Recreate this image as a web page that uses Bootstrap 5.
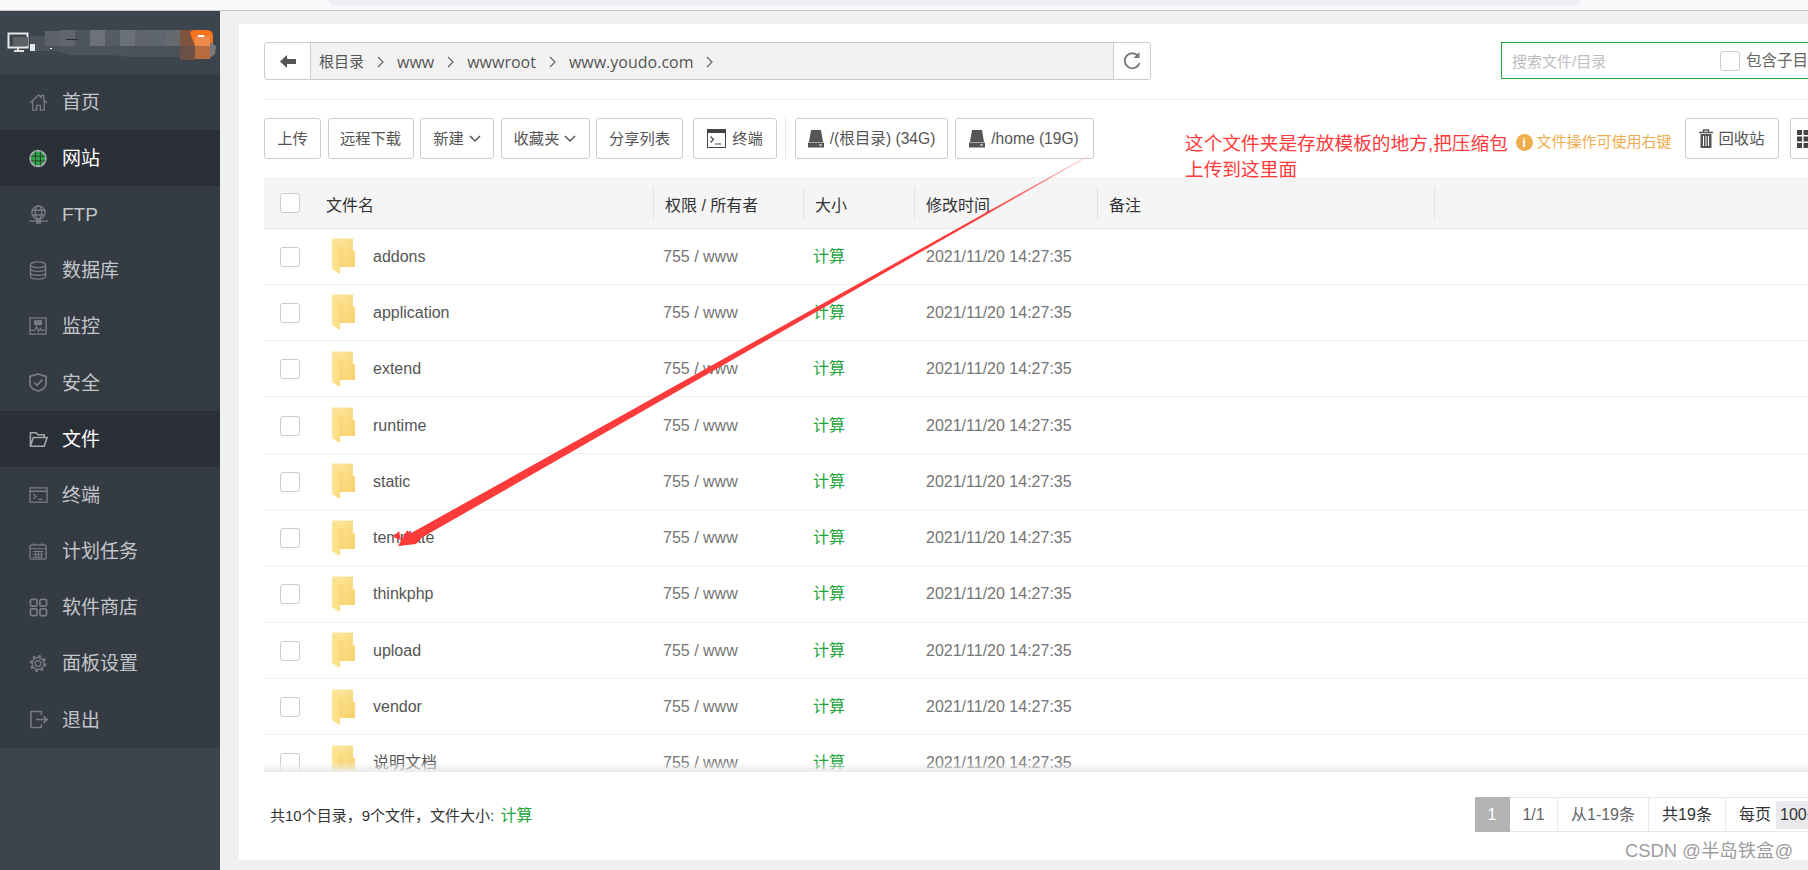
<!DOCTYPE html>
<html lang="zh-CN">
<head>
<meta charset="utf-8">
<title>文件管理</title>
<link rel="stylesheet" href="https://cdn.jsdelivr.net/npm/bootstrap@5.3.0/dist/css/bootstrap.min.css">
<style>
html,body{height:100%;overflow:hidden}
body{font-family:"Liberation Sans","Noto Sans CJK SC",sans-serif;background:#f0f0f0;color:#555;position:relative}
.top-strip{height:11px;flex:none;background:#f8f9fb;border-bottom:1px solid #c9c9c9}
.top-tab{width:1252px;height:5px;margin-left:329px;background:#eeeff3;border-radius:0 0 7px 7px}
.side{width:220px;flex:none;background:#3c444e}
.logo-box{height:63px;padding-top:13px;flex:none}
.logo-box svg{display:block}
.side-nav{background:#343b43}
.side-link{height:56.17px;padding:0 0 0 29px;display:flex;align-items:center;color:#c3c6c9;font-size:19px;gap:14px}
.side-link span{padding-top:2px}
.side-link:hover{color:#fff}
.side-link.on{background:#2b3038;color:#fff}
.nv-ic{width:19px;height:19px;flex:none;fill:none;stroke:#777c81;stroke-width:1.4}
.work{padding:13px 0 10px 19px;min-width:0}
.sheet{background:#fff;height:100%;padding:18px 0 0 25px;overflow:hidden}
.path-row{padding-bottom:19px;border-bottom:1px solid #eee;flex:none}
.path-bar{flex:0 0 887px;height:38px;border:1px solid #ccc;border-radius:3px;overflow:hidden}
.path-back{flex:0 0 46px;border-right:1px solid #ccc}
.path-mid{background:#f2f2f2;font-size:15px;color:#555;gap:13px;padding:2px 0 0 8px}
.path-mid .lat{font-family:"Open Sans","Noto Sans CJK SC",sans-serif;font-size:16px}
.path-re{flex:0 0 37px;border-left:1px solid #ccc}
.find-box{flex:0 0 340px;margin-left:350px;height:37px;border:1px solid #20a53a;padding-left:10px;font-size:15px}
.find-hint{flex:0 0 208px;color:#bdbdbd;padding-top:3px}
.find-box .tick{margin-right:6px}
.find-box .find-lbl{white-space:nowrap;color:#666;font-size:15.5px}
.tick{width:20px;height:20px;border:1px solid #ccc;border-radius:3px;background:#fff;display:block;flex:none}
.tool-row{margin-top:18px;margin-bottom:18px;flex:none;height:41px}
.tb-btn{flex:none;height:41px;padding:0;font-size:15.3px;line-height:39px;color:#555;border:1px solid #ccc;border-radius:3px;background:#fff;white-space:nowrap;display:inline-flex;align-items:center;justify-content:center;gap:5px}
.tb-wide{gap:6px}
.tb-gap{margin-left:6.5px}
.w-up{width:57px}.w-dl{width:86px}.w-new{width:74px}.w-fav{width:89px}.w-sh{width:87px}.w-tm{width:84px;margin-left:10px}
.w-root{width:153px;font-size:15.6px}.w-home{width:139px;font-size:15.6px}.w-bin{width:94px}.w-gr{width:60px;margin-left:11px;justify-content:flex-start;padding-left:6px}
.tb-sep{flex:none;width:1px;height:41px;background:#e8e8e8;margin:0 9px 0 8px}
.tip-note{flex:none;margin-left:422px;width:169px;color:#f0ad4e;font-size:15px;padding-top:8px;gap:4px;white-space:nowrap}
.tip-dot{width:17px;height:17px;flex:none;border-radius:50%;background:#f0ad4e;color:#fff;font-weight:700;font-size:13px;line-height:17px;text-align:center}
.grid-wrap{flex:1 1 auto;min-height:0;overflow:hidden;position:relative}
.grid-wrap::after{content:"";position:absolute;left:0;right:0;bottom:0;height:10px;background:linear-gradient(rgba(235,235,235,0),#ebebeb)}
.file-tb{table-layout:fixed;width:100%;margin:0;color:#555;font-size:16px}
.file-tb th{height:51px;padding:10px 0 0;vertical-align:top;background:#f5f5f5;border-bottom:1px solid #e4e4e4;font-weight:400;color:#333;box-shadow:none}
.file-tb td{height:56.3px;padding:1px 0 0;border-bottom:1px solid #f0f0f0;vertical-align:middle;box-shadow:none}
.th-in{height:32px;border-left:1px solid #e2e2e2;padding:6px 0 0 11px;display:flex;align-items:center;white-space:nowrap}
.th-plain{border-left:0;padding-left:0}
.cell-g{color:#757575;padding-left:10px!important}
.cell-d{color:#757575;padding-left:12px!important;white-space:nowrap}
.cell-calc{color:#20a53a;padding-left:10px!important}
.name-in{padding-left:6px;gap:18px}
.folder{width:23px;height:36px;flex:none;display:block;margin-top:-1px}
.foot-row{height:88px;flex:none}
.foot-l{flex:0 0 1211px;padding-left:6px;font-size:15px;color:#333}
.foot-l b{font-weight:400;color:#20a53a;font-size:16px;margin-left:2px}
.pager{height:35px;flex:none;font-size:16px;margin-top:-3px}
.pg-it{height:35px;line-height:33px;border:1px solid #e8e8e8;border-left:0;text-align:center;color:#666;white-space:nowrap;flex:none}
.pg-on{background:#b3b3b3;border-color:#b3b3b3;color:#fff;width:35px}
.pg-a{width:48px}.pg-b{width:91px}.pg-c{width:77px;color:#333}.pg-d{padding:0 0 0 13px;color:#333;border-right:0;width:200px;text-align:left}
.pg-chip{display:inline-block;background:#eaeaee;padding:0 4px;margin-left:5px;height:28px;line-height:28px;border-radius:2px}
.anno-svg{position:absolute;left:0;top:0;pointer-events:none}
.anno-txt{position:absolute;left:1185px;top:131px;font-size:18.7px;line-height:25.5px;color:#ff3a3a;white-space:nowrap}
.wm{position:absolute;left:1625px;top:839px;font-size:18.4px;line-height:24px;color:#9c9c9c;text-shadow:0 0 2px #fff;white-space:nowrap}
</style>
</head>
<body>
<div class="d-flex flex-column vh-100">
  <div class="top-strip"><div class="top-tab"></div></div>
  <div class="d-flex flex-grow-1" style="min-height:0">
    <aside class="side d-flex flex-column">
      <div class="logo-box">
        <svg width="220" height="50" viewBox="0 0 220 50">
          <g transform="translate(0,-24)">
            <path d="M30 36h15v-5h135v-1h20v27H130l-20-2H70l-15-4H30z" fill="#4c535b"/>
            <rect x="45" y="31" width="15" height="15" fill="#5c6268"/><rect x="60" y="30" width="15" height="16" fill="#61666d"/>
            <rect x="75" y="30" width="15" height="16" fill="#4f555d"/><rect x="90" y="30" width="15" height="16" fill="#6c7278"/>
            <rect x="105" y="30" width="15" height="16" fill="#565c66"/><rect x="120" y="30" width="15" height="16" fill="#6b7179"/>
            <rect x="135" y="30" width="15" height="16" fill="#60646a"/><rect x="150" y="30" width="15" height="16" fill="#5f656c"/>
            <rect x="165" y="30" width="15" height="16" fill="#646a6e"/>
            <rect x="130" y="46" width="50" height="11" fill="#4a5159"/>
            <rect x="180" y="30" width="15" height="16" fill="#7f5540"/><rect x="180" y="46" width="15" height="14" fill="#6b5145"/>
            <path d="M190 33q1-3 6-3h11q6 0 6 6v9l-3 1h-15z" fill="#f7741f"/>
            <rect x="195" y="36" width="15" height="10" fill="#ee8a4c"/><rect x="195" y="46" width="15" height="13" fill="#b96b40"/>
            <path d="M210 42l6 4-1 8-5 4z" fill="#7a7a7a"/>
            <rect x="198" y="35" width="6" height="2" fill="#fff"/>
            <rect x="8.500" y="33.500" width="19" height="14" fill="none" stroke="#e8e8e8" stroke-width="2"/>
            <rect x="13" y="37" width="15" height="9" fill="#5c6268"/>
            <path d="M14 51h10M18 48v3" stroke="#dcdcdc" stroke-width="2"/>
            <rect x="30" y="44" width="5" height="7" fill="#e8e8e8"/>
            <rect x="50" y="48" width="2" height="1" fill="#fff"/><rect x="66" y="39" width="12" height="1" fill="#2a2f38"/>
          </g>
        </svg>
      </div>
      <nav class="nav flex-column side-nav">
        <a class="nav-link side-link" href="#"><svg class="nv-ic" viewBox="0 0 20 20"><path d="M1 10.500 10 2l3 2.800V2.500h2.500v4.700L19 10.500M4 9v9h4v-5h4v5h4V9"/></svg><span>首页</span></a>
        <a class="nav-link side-link on" href="#"><svg class="nv-ic" viewBox="0 0 20 20"><circle cx="9.500" cy="10" r="8.300" fill="#2aa84a" stroke="#a9aeb1" stroke-width="1.800"/><path d="M2 7.500h15M2 12.500h15M7 2.500v15M12 2.500v15" stroke="#2b3a30" stroke-width="1"/></svg><span>网站</span></a>
        <a class="nav-link side-link" href="#"><svg class="nv-ic" viewBox="0 0 20 20"><circle cx="10" cy="8" r="7"/><ellipse cx="10" cy="8" rx="3.500" ry="7"/><path d="M3 5.500h14M3 10.500h14M0 17h20"/><rect x="8" y="15" width="4" height="4" fill="#777c81"/></svg><span>FTP</span></a>
        <a class="nav-link side-link" href="#"><svg class="nv-ic" viewBox="0 0 20 20"><ellipse cx="9.500" cy="4" rx="8" ry="3"/><path d="M1.500 4v12c0 1.700 3.600 3 8 3s8-1.300 8-3V4M1.500 8c0 1.700 3.600 3 8 3s8-1.300 8-3M1.500 12c0 1.700 3.600 3 8 3s8-1.300 8-3"/></svg><span>数据库</span></a>
        <a class="nav-link side-link" href="#"><svg class="nv-ic" viewBox="0 0 20 20"><rect x="1" y="1" width="17" height="17"/><rect x="6" y="4" width="7" height="4" fill="#777c81"/><path d="M2 14h4l2-4 2 5 2-3 1 2h4"/></svg><span>监控</span></a>
        <a class="nav-link side-link" href="#"><svg class="nv-ic" viewBox="0 0 20 20"><path d="M9.500 1 18 3.500v7.500c0 4-4.500 6.800-8.500 8C5.500 17.800 1 15 1 11V3.500z" stroke-width="1.800"/><path d="M5.500 10l3 3 5.500-6" stroke-width="1.800"/></svg><span>安全</span></a>
        <a class="nav-link side-link on" href="#"><svg class="nv-ic" viewBox="0 0 20 20"><path d="M1.500 17V3h6l2 2h6.500v3M1.500 17H16l3-9H4.500z" stroke="#a4a8ab" stroke-width="1.600"/></svg><span>文件</span></a>
        <a class="nav-link side-link" href="#"><svg class="nv-ic" viewBox="0 0 20 20"><rect x="1" y="2" width="18" height="15"/><path d="M1 5.500h18M4.500 8.500l3 2.500-3 2.500M9.500 14h5"/></svg><span>终端</span></a>
        <a class="nav-link side-link" href="#"><svg class="nv-ic" viewBox="0 0 20 20"><rect x="1" y="3" width="17" height="15" rx="2"/><path d="M1 7h17M5 1v3M14 1v3M4 10h11M4 13h11M4 16h11M7 9v8M10 9v8M13 9v8" stroke-width="1"/></svg><span>计划任务</span></a>
        <a class="nav-link side-link" href="#"><svg class="nv-ic" viewBox="0 0 20 20" stroke-width="2"><rect x="1.500" y="1.500" width="7" height="7" rx="1.500" stroke-width="1.800"/><rect x="11.500" y="1.500" width="7" height="7" rx="1.500" stroke-width="1.800"/><rect x="1.500" y="11.500" width="7" height="7" rx="1.500" stroke-width="1.800"/><rect x="11.500" y="11.500" width="7" height="7" rx="1.500" stroke-width="1.800"/></svg><span>软件商店</span></a>
        <a class="nav-link side-link" href="#"><svg class="nv-ic" viewBox="0 0 20 20"><circle cx="9.500" cy="10" r="3"/><circle cx="9.500" cy="10" r="6.200"/><circle cx="9.500" cy="10" r="7.800" stroke-width="2.200" stroke-dasharray="3 3.130"/></svg><span>面板设置</span></a>
        <a class="nav-link side-link" href="#"><svg class="nv-ic" viewBox="0 0 20 20"><path d="M13 5.500V1.500H2v17h11V15M7 10h12M15 6.500l4 3.500-4 3.500" stroke-width="1.600"/></svg><span>退出</span></a>
      </nav>
    </aside>
    <main class="work flex-grow-1">
      <div class="sheet d-flex flex-column">
        <div class="path-row d-flex">
          <div class="path-bar d-flex">
            <div class="path-back d-flex align-items-center justify-content-center"><svg width="16" height="13" viewBox="0 0 16 13"><path d="M0 6.500 7 0v4h9v5H7v4z" fill="#555"/></svg></div>
            <div class="path-mid flex-grow-1 d-flex align-items-center">
              <span>根目录</span><svg width="7" height="12" viewBox="0 0 7 12"><path d="M1 1l5 5-5 5" fill="none" stroke="#666" stroke-width="1.200"/></svg>
              <span class="lat">www</span><svg width="7" height="12" viewBox="0 0 7 12"><path d="M1 1l5 5-5 5" fill="none" stroke="#666" stroke-width="1.200"/></svg>
              <span class="lat">wwwroot</span><svg width="7" height="12" viewBox="0 0 7 12"><path d="M1 1l5 5-5 5" fill="none" stroke="#666" stroke-width="1.200"/></svg>
              <span class="lat">www.youdo.com</span><svg width="7" height="12" viewBox="0 0 7 12"><path d="M1 1l5 5-5 5" fill="none" stroke="#666" stroke-width="1.200"/></svg>
            </div>
            <div class="path-re d-flex align-items-center justify-content-center"><svg width="18" height="20" viewBox="0 0 18 20"><path d="M15.500 5.500A7.500 7.500 0 1 0 16.500 12" fill="none" stroke="#777" stroke-width="1.800"/><path d="M16.500 1v6h-6z" fill="#777"/></svg></div>
          </div>
          <div class="find-box d-flex align-items-center">
            <span class="find-hint">搜索文件/目录</span><span class="tick"></span><span class="find-lbl">包含子目录</span>
          </div>
        </div>
        <div class="tool-row d-flex">
          <button class="btn tb-btn w-up" type="button">上传</button>
          <button class="btn tb-btn w-dl tb-gap" type="button">远程下载</button>
          <button class="btn tb-btn w-new tb-gap" type="button">新建<svg width="12" height="8" viewBox="0 0 12 8"><path d="M1 1l5 5 5-5" fill="none" stroke="#555" stroke-width="1.500"/></svg></button>
          <button class="btn tb-btn w-fav tb-gap" type="button">收藏夹<svg width="12" height="8" viewBox="0 0 12 8"><path d="M1 1l5 5 5-5" fill="none" stroke="#555" stroke-width="1.500"/></svg></button>
          <button class="btn tb-btn w-sh tb-gap" type="button">分享列表</button>
          <button class="btn tb-btn tb-wide w-tm" type="button"><svg width="19" height="19" viewBox="0 0 19 19"><rect x=".5" y=".5" width="18" height="18" fill="#fff" stroke="#444"/><rect x="0" y="0" width="19" height="4" fill="#444"/><path d="M3.500 7.500l3 3-3 3M8 15h6" fill="none" stroke="#444" stroke-width="1.200"/></svg>终端</button>
          <span class="tb-sep"></span>
          <button class="btn tb-btn tb-wide w-root" type="button"><svg width="16" height="18" viewBox="0 0 16 18"><path d="M3 0h10l2 12H1z" fill="#555"/><rect x="0" y="12.500" width="16" height="5" fill="#555"/><rect x="11" y="14.500" width="3" height="1" fill="#fff"/></svg>/(根目录) (34G)</button>
          <button class="btn tb-btn tb-wide w-home tb-gap" type="button"><svg width="16" height="18" viewBox="0 0 16 18"><path d="M3 0h10l2 12H1z" fill="#555"/><rect x="0" y="12.500" width="16" height="5" fill="#555"/><rect x="11" y="14.500" width="3" height="1" fill="#fff"/></svg>/home (19G)</button>
          <div class="tip-note d-flex align-items-center"><span class="tip-dot">i</span><span>文件操作可使用右键</span></div>
          <button class="btn tb-btn tb-wide w-bin" type="button"><svg width="14" height="20" viewBox="0 0 14 20"><path d="M0 3.500h14M4.500 3V1h5v2" fill="none" stroke="#555" stroke-width="1.400"/><path d="M1.500 5h11v14h-11z" fill="#555"/><path d="M4.500 7v10M7 7v10M9.500 7v10" stroke="#fff" stroke-width="1"/></svg>回收站</button>
          <button class="btn tb-btn w-gr" type="button"><svg width="18" height="18" viewBox="0 0 18 18" fill="#444"><rect width="5" height="5"/><rect x="6.500" width="5" height="5"/><rect x="13" width="5" height="5"/><rect y="6.500" width="5" height="5"/><rect x="6.500" y="6.500" width="5" height="5"/><rect x="13" y="6.500" width="5" height="5"/><rect y="13" width="5" height="5"/><rect x="6.500" y="13" width="5" height="5"/><rect x="13" y="13" width="5" height="5"/></svg></button>
        </div>
        <div class="grid-wrap">
          <table class="table file-tb">
            <colgroup><col style="width:62px"><col style="width:327px"><col style="width:150px"><col style="width:111px"><col style="width:183px"><col style="width:337px"><col></colgroup>
            <thead><tr>
              <th><div class="th-in th-plain" style="padding:0 0 0 16px"><span class="tick"></span></div></th>
              <th><div class="th-in th-plain">文件名</div></th>
              <th><div class="th-in">权限 / 所有者</div></th>
              <th><div class="th-in">大小</div></th>
              <th><div class="th-in">修改时间</div></th>
              <th><div class="th-in">备注</div></th>
              <th><div class="th-in"></div></th>
            </tr></thead>
            <tbody id="rows"></tbody>
          </table>
        </div>
        <div class="foot-row d-flex align-items-center">
          <div class="foot-l">共10个目录，9个文件，文件大小: <b>计算</b></div>
          <div class="pager d-flex">
            <span class="pg-it pg-on">1</span><span class="pg-it pg-a">1/1</span><span class="pg-it pg-b">从1-19条</span><span class="pg-it pg-c">共19条</span><span class="pg-it pg-d">每页<span class="pg-chip">100条</span></span>
          </div>
        </div>
      </div>
    </main>
  </div>
</div>
<svg class="anno-svg" width="1808" height="870" viewBox="0 0 1808 870">
  <defs>
    <linearGradient id="fade" gradientUnits="userSpaceOnUse" x1="1090" y1="155" x2="985" y2="214"><stop offset="0" stop-color="#ff3a3a" stop-opacity=".3"/><stop offset="1" stop-color="#ff3a3a"/></linearGradient>
    <linearGradient id="fBody" x1="0" y1="0" x2="1" y2="1"><stop offset="0" stop-color="#fee9a6"/><stop offset="1" stop-color="#f6cf62"/></linearGradient>
    <linearGradient id="fFlap" x1="0" y1="0" x2="1" y2="0"><stop offset="0" stop-color="#fee596"/><stop offset="1" stop-color="#fbdb7e"/></linearGradient>
  </defs>
  <path d="M1090 155.300 422 537.500 416 544 398 546 403 537 407 530.500 411 533 417.500 529.500 1089.800 154.700z" fill="url(#fade)"/>
  <path d="M393 537 399 531 401 540z" fill="#ff3a3a"/>
</svg>
<div class="anno-txt">这个文件夹是存放模板的地方,把压缩包<br>上传到这里面</div>
<div class="wm">CSDN @半岛铁盒@</div>
<script>
var names=["addons","application","extend","runtime","static","template","thinkphp","upload","vendor","说明文档"];
var folder='<svg class="folder" viewBox="0 0 23 36"><path d="M0 0h21v13h2v16H8v6L0 31z" fill="url(#fBody)"/><path d="M0 0h21v1H0z" fill="#fff3c9"/><path d="M8 8v21h3V9z" fill="#f5d06c" opacity=".45"/><path d="M0 .5l8 7V36L0 31z" fill="url(#fFlap)"/></svg>';
document.getElementById("rows").innerHTML=names.map(function(n){
  return '<tr><td><div style="padding-left:16px"><span class="tick"></span></div></td>'+
  '<td><div class="name-in d-flex align-items-center">'+folder+'<span>'+n+'</span></div></td>'+
  '<td class="cell-g">755 / www</td><td class="cell-calc">计算</td><td class="cell-d">2021/11/20 14:27:35</td><td></td><td></td></tr>';
}).join("");
</script>
<script src="https://cdn.jsdelivr.net/npm/bootstrap@5.3.0/dist/js/bootstrap.bundle.min.js"></script>
</body>
</html>
